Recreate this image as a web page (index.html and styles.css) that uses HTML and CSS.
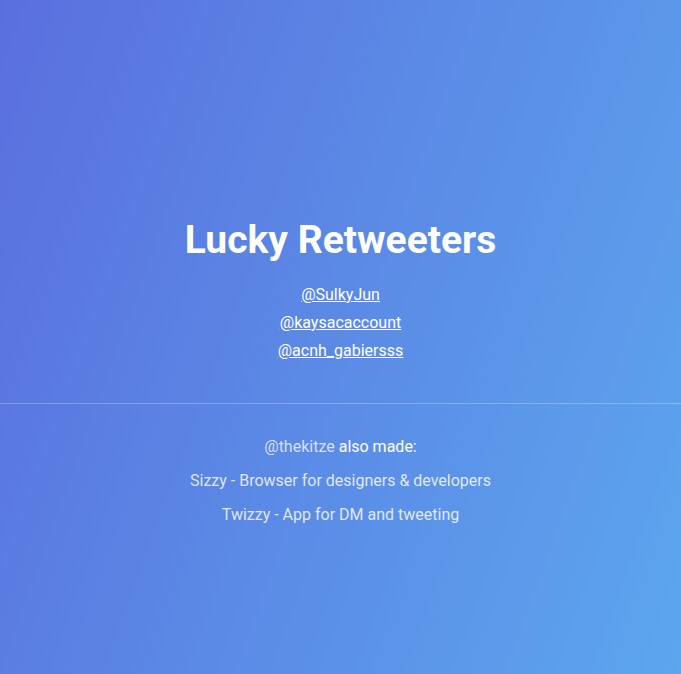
FILE: index.html
```html
<!DOCTYPE html>
<html>
<head>
<meta charset="utf-8">
<link rel="stylesheet" href="styles.css">
</head>
<body>
<div class="page">
  <section class="top">
    <h1 class="title">Lucky Retweeters</h1>
    <ul class="winners">
      <li><a href="#">@SulkyJun</a></li>
      <li><a href="#">@kaysacaccount</a></li>
      <li><a href="#">@acnh_gabiersss</a></li>
    </ul>
  </section>
  <section class="bottom">
    <p class="made"><span class="handle">@thekitze</span> also made:</p>
    <p class="product">Sizzy - Browser for designers &amp; developers</p>
    <p class="product">Twizzy - App for DM and tweeting</p>
  </section>
</div>
</body>
</html>
```
FILE: styles.css
```css
html, body {
  margin: 0;
  padding: 0;
  height: 100%;
}
body {
  font-family: Roboto, "Liberation Sans", sans-serif;
  color: #fff;
}
.page {
  height: 674px;
  background: linear-gradient(110deg, #5a6fde 0%, #5ca6ee 100%);
  display: flex;
  flex-direction: column;
}
.top {
  height: 404px;
  display: flex;
  flex-direction: column;
  justify-content: flex-end;
  align-items: center;
  padding-bottom: 38px;
  box-sizing: border-box;
  border-bottom: 1px solid rgba(255,255,255,0.25);
}
.title {
  margin: 0 0 18px;
  font-size: 39px;
  line-height: 46px;
  font-weight: 700;
}
.winners {
  list-style: none;
  margin: 0;
  padding: 0;
  text-align: center;
}
.winners li {
  font-size: 16px;
  line-height: 28px;
}
.winners a {
  color: #fff;
  text-decoration: underline;
}
.bottom {
  display: flex;
  flex-direction: column;
  align-items: center;
  padding-top: 26px;
}
.bottom p {
  margin: 0;
  font-size: 16px;
  line-height: 34px;
}
.handle {
  color: rgba(255,255,255,0.75);
}
.product {
  color: rgba(255,255,255,0.82);
}
```
